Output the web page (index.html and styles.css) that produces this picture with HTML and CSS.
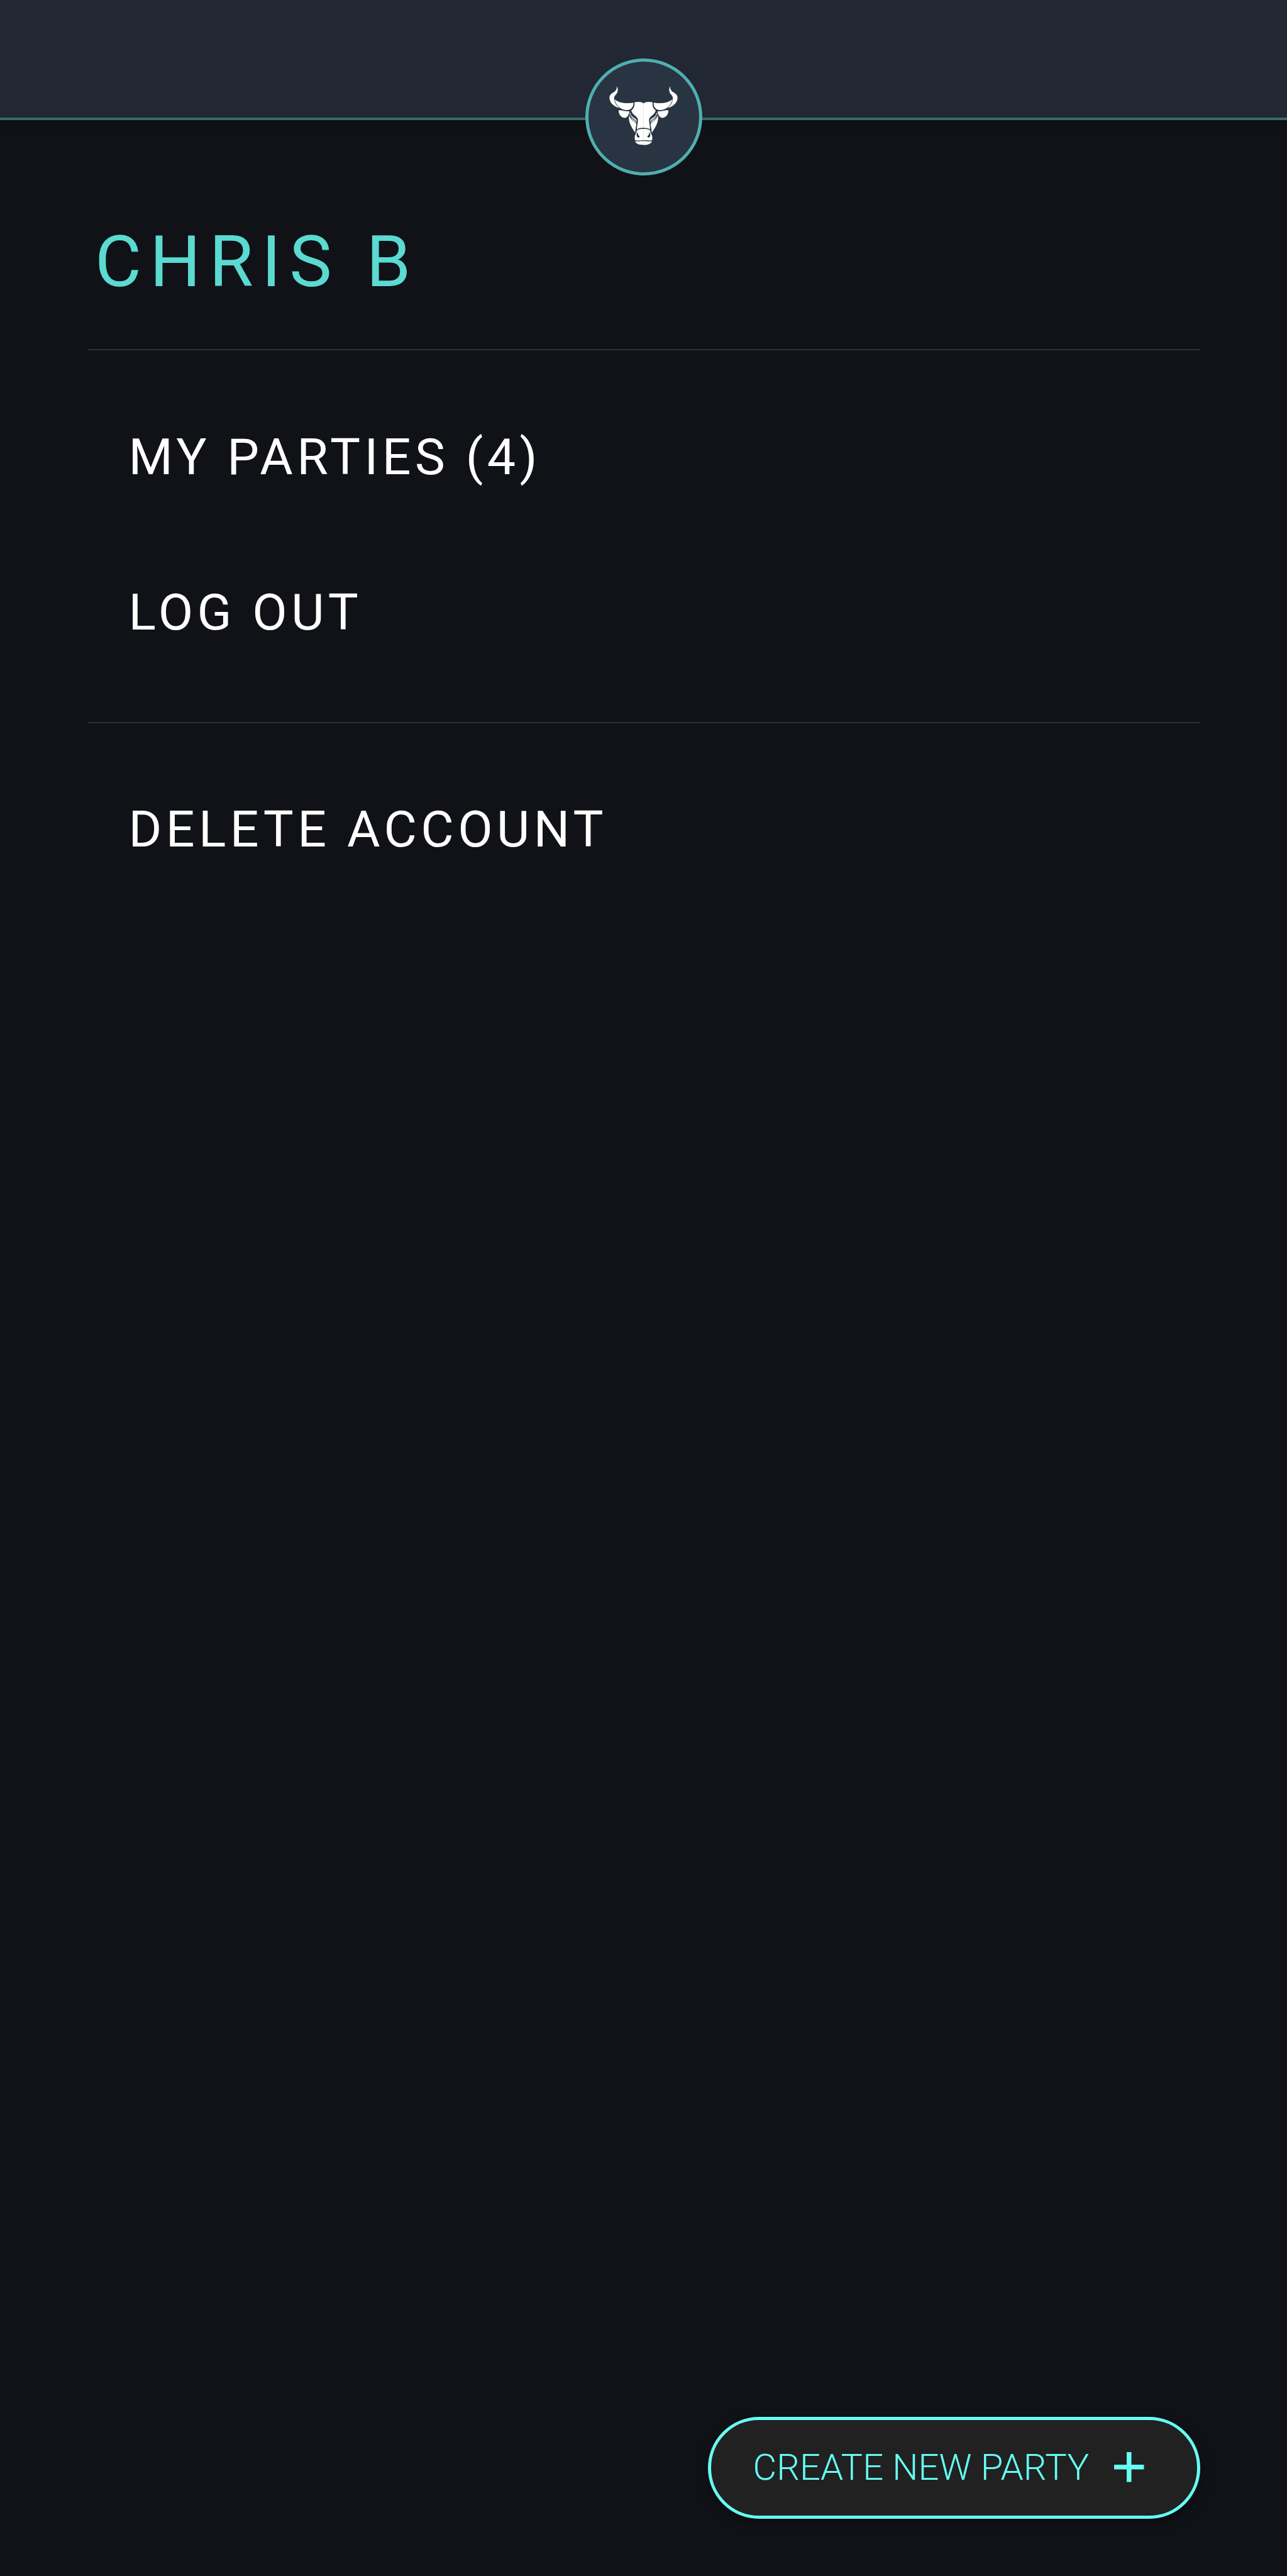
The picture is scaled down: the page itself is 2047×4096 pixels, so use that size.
FILE: index.html
```
<!DOCTYPE html>
<html lang="en">
<head>
<meta charset="utf-8">
<title>Account</title>
<link rel="stylesheet" href="styles.css">
</head>
<body>
<div class="page">
  <header class="topbar">
    <a class="logo" aria-label="Home">
      <svg class="bull" viewBox="0 0 421 375" aria-hidden="true">
        <defs>
          <g id="half">
            <path class="fill" d="M77 45C84 60 82 76 71 87C64 94 61 102 63 110C66 129 74 142 88 155C62 147 40 129 39 104C39 88 49 81 60 75C70 69 76 61 77 45Z"/>
            <path class="fill" d="M65 110C80 125 112 135 159 127C161 144 153 157 139 163C122 168 104 162 91 153C78 144 70 130 65 110Z"/>
            <path class="fill" d="M85 166C99 162 109 171 140 171C137 188 129 202 118 204C102 204 85 190 85 166Z"/>
            <path class="fill" d="M211 131C199 122 182 122 164 126C168 144 160 159 149 166C152 188 176 192 182 210C184 226 178 236 177 262C185 256 198 254 211 254Z"/>
            <path class="fill" d="M144 177C146 192 157 200 167 206C176 212 178 217 178 229C162 224 148 211 141 190C140 184 141 180 144 177Z"/>
            <path class="fill" d="M138 190C145 211 158 222 174 231C175 243 170 255 169 279C153 256 136 230 137 202Z"/>
            <path class="line" d="M142 186C146 204 158 210 168 216Q176 221 178 230"/>
            <path class="fill" d="M211 260C194 259 180 261 176 270C175 284 166 290 166 303L167 316C181 321 190 316 211 317Z"/>
            <path class="fill" d="M168 321C182 324 195 320 211 321V340C187 340 172 334 168 321Z"/>
            <path class="dark" d="M179 276C174 288 176 301 184 303C189 303 192 300 191 296C184 294 183 282 179 276Z"/>
          </g>
        </defs>
        <use href="#half"/>
        <use href="#half" transform="matrix(-1 0 0 1 421 0)"/>
      </svg>
    </a>
  </header>
  <main class="content">
    <h1 class="name">CHRIS B</h1>
    <nav class="group group-main">
      <a class="item">MY PARTIES (4)</a>
      <a class="item">LOG OUT</a>
    </nav>
    <nav class="group">
      <a class="item">DELETE ACCOUNT</a>
    </nav>
  </main>
  <footer class="footer">
    <button class="create">
      <span>CREATE NEW PARTY</span>
      <svg class="plus" viewBox="0 0 48 48" aria-hidden="true"><path d="M24 0V48M0 24H48"/></svg>
    </button>
  </footer>
</div>
</body>
</html>
```
FILE: styles.css
```
* { box-sizing: border-box; }

body {
  margin: 0;
  background: #101217;
  font-family: Roboto, sans-serif;
}

.page {
  display: flex;
  flex-direction: column;
  width: 2047px;
  height: 4096px;
}

.topbar {
  display: flex;
  justify-content: center;
  flex: none;
  height: 191px;
  padding-top: 93px;
  background: #212833;
  border-bottom: 4px solid #37696b;
  box-shadow: 0 3px 18px rgba(0, 0, 0, 0.3);
}

.logo {
  flex: none;
  width: 186px;
  height: 186px;
  padding: 25px 0 0 21px;
  border: 5px solid #50afb0;
  border-radius: 50%;
  background: #283442;
}

.bull {
  display: block;
  width: 133px;
  height: 118.5px;
}

.fill { fill: #fff; }
.dark { fill: #283442; }
.line { fill: none; stroke: #283442; stroke-width: 4; }

.content {
  flex: 1;
  padding: 156px 138px 0 139px;
}

.name {
  margin: 0 0 68px;
  padding-left: 12px;
  color: #5adad1;
  font-size: 113.7px;
  font-weight: 400;
  line-height: 140px;
  letter-spacing: 13.3px;
}

.group {
  display: flex;
  flex-direction: column;
  padding-top: 45px;
  border-top: 2px solid #2e2f33;
}

.group-main { padding: 46px 0 51px; }

.item {
  padding-left: 65.5px;
  color: #fff;
  font-size: 80.6px;
  line-height: 247px;
  letter-spacing: 6.4px;
}

.footer {
  display: flex;
  justify-content: flex-end;
  padding: 0 138.5px 91px 0;
}

.create {
  display: flex;
  align-items: center;
  justify-content: space-between;
  width: 783px;
  height: 162px;
  padding: 0 84px 2px 67px;
  border: 5px solid #65fff4;
  border-radius: 81px;
  background: #212121;
  box-shadow: 0 6px 20px rgba(0, 0, 0, 0.35);
  color: #65fff4;
  font-family: Roboto, sans-serif;
  font-size: 58px;
  font-weight: 300;
  line-height: 70px;
}

.plus {
  width: 47.5px;
  height: 47.5px;
}

.plus path { stroke: #65fff4; stroke-width: 7.6; }
```
